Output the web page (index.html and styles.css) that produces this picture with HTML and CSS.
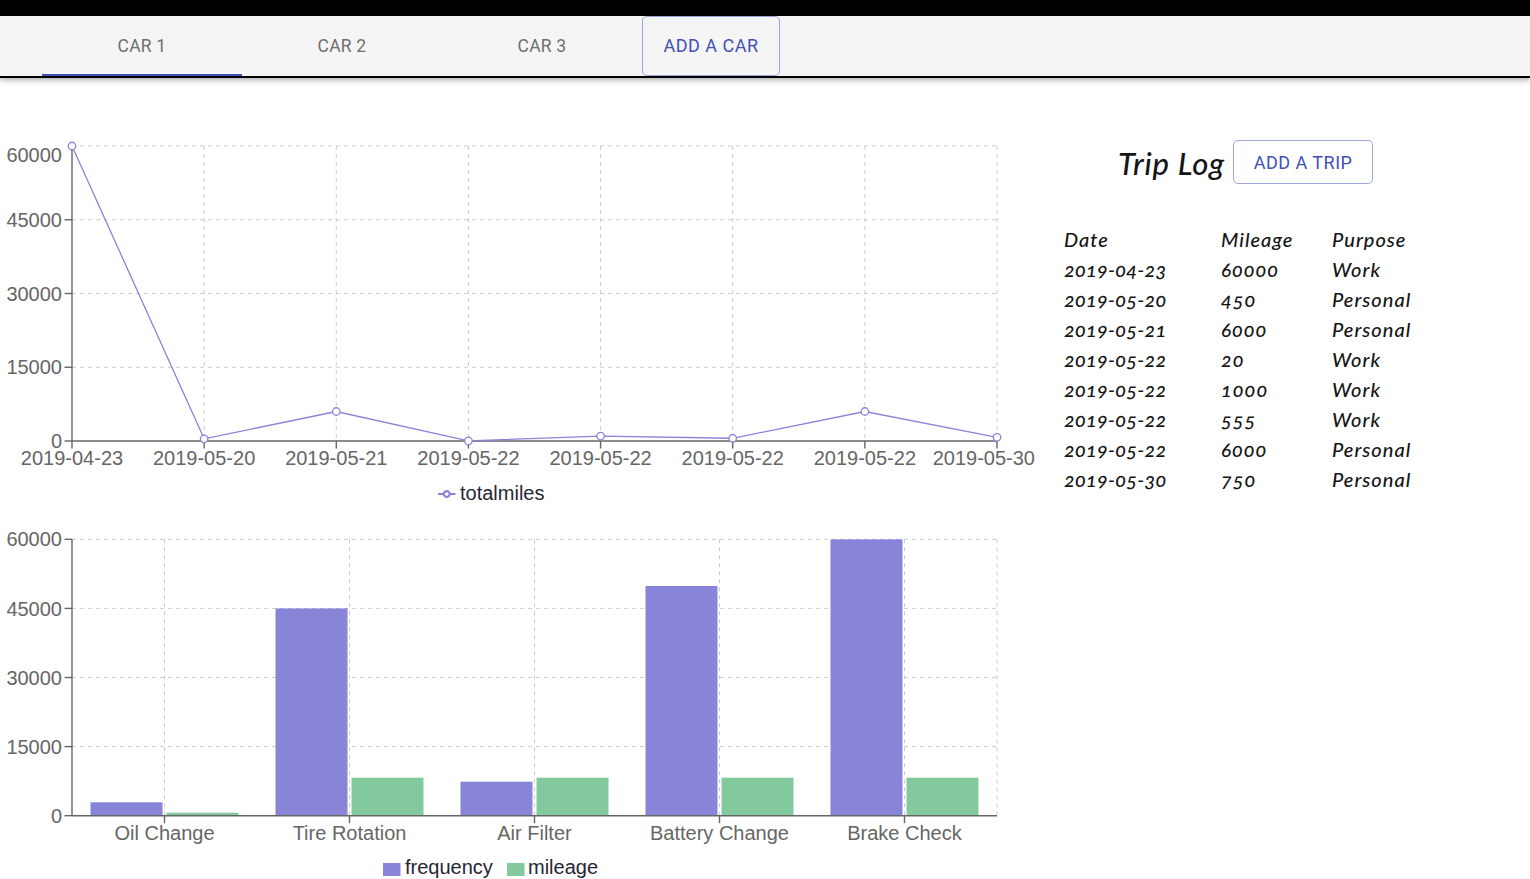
FILE: index.html
```html
<!DOCTYPE html>
<html lang="en">
<head>
<meta charset="utf-8">
<title>Car Log</title>
<link rel="stylesheet" href="styles.css">
</head>
<body>
<div class="topbar"></div>
<header class="appbar">
  <nav class="tabs">
    <div class="tab active">CAR 1</div>
    <div class="tab">CAR 2</div>
    <div class="tab">CAR 3</div>
    <button class="btn-outline btn-tab">ADD A CAR</button>
  </nav>
</header>
<main class="content">
  <section class="charts">
    <svg class="chart" width="1040" height="437" viewBox="0 78 1040 437">
      <g class="grid">
        <line x1="72" y1="146" x2="997" y2="146"/>
        <line x1="72" y1="219.75" x2="997" y2="219.75"/>
        <line x1="72" y1="293.5" x2="997" y2="293.5"/>
        <line x1="72" y1="367.25" x2="997" y2="367.25"/>
        <line x1="204.14" y1="146" x2="204.14" y2="441"/>
        <line x1="336.29" y1="146" x2="336.29" y2="441"/>
        <line x1="468.43" y1="146" x2="468.43" y2="441"/>
        <line x1="600.57" y1="146" x2="600.57" y2="441"/>
        <line x1="732.71" y1="146" x2="732.71" y2="441"/>
        <line x1="864.86" y1="146" x2="864.86" y2="441"/>
        <line x1="997" y1="146" x2="997" y2="441"/>
      </g>
      <g class="axis">
        <line x1="72" y1="146" x2="72" y2="441"/>
        <line x1="72" y1="441" x2="997" y2="441"/>
        <line x1="64.5" y1="219.75" x2="72" y2="219.75"/>
        <line x1="64.5" y1="293.5" x2="72" y2="293.5"/>
        <line x1="64.5" y1="367.25" x2="72" y2="367.25"/>
        <line x1="64.5" y1="441" x2="72" y2="441"/>
        <line x1="72" y1="441" x2="72" y2="448.5"/>
        <line x1="204.14" y1="441" x2="204.14" y2="448.5"/>
        <line x1="336.29" y1="441" x2="336.29" y2="448.5"/>
        <line x1="468.43" y1="441" x2="468.43" y2="448.5"/>
        <line x1="600.57" y1="441" x2="600.57" y2="448.5"/>
        <line x1="732.71" y1="441" x2="732.71" y2="448.5"/>
        <line x1="864.86" y1="441" x2="864.86" y2="448.5"/>
        <line x1="997" y1="441" x2="997" y2="448.5"/>
      </g>
      <g class="tick-y">
        <text x="62" y="162">60000</text>
        <text x="62" y="226.85">45000</text>
        <text x="62" y="300.6">30000</text>
        <text x="62" y="374.35">15000</text>
        <text x="62" y="448.1">0</text>
      </g>
      <g class="tick-x">
        <text x="72" y="465">2019-04-23</text>
        <text x="204.14" y="465">2019-05-20</text>
        <text x="336.29" y="465">2019-05-21</text>
        <text x="468.43" y="465">2019-05-22</text>
        <text x="600.57" y="465">2019-05-22</text>
        <text x="732.71" y="465">2019-05-22</text>
        <text x="864.86" y="465">2019-05-22</text>
        <text x="1035" y="465" class="end">2019-05-30</text>
      </g>
      <polyline class="series-line" points="72,146 204.14,438.79 336.29,411.5 468.43,440.9 600.57,436.08 732.71,438.27 864.86,411.5 997,437.31"/>
      <g class="dots">
        <circle cx="72" cy="146" r="3.75"/>
        <circle cx="204.14" cy="438.79" r="3.75"/>
        <circle cx="336.29" cy="411.5" r="3.75"/>
        <circle cx="468.43" cy="440.9" r="3.75"/>
        <circle cx="600.57" cy="436.08" r="3.75"/>
        <circle cx="732.71" cy="438.27" r="3.75"/>
        <circle cx="864.86" cy="411.5" r="3.75"/>
        <circle cx="997" cy="437.31" r="3.75"/>
      </g>
      <g class="legend">
        <g transform="translate(438 485.25) scale(0.547)">
          <path class="legend-line" d="M0,16h10.67A5.33,5.33,0,1,1,21.33,16H32M21.33,16A5.33,5.33,0,1,1,10.67,16"/>
        </g>
        <text x="460" y="500">totalmiles</text>
      </g>
    </svg>

    <svg class="chart" width="1040" height="364" viewBox="0 515 1040 364">
      <g class="grid">
        <line x1="72" y1="539.3" x2="997" y2="539.3"/>
        <line x1="72" y1="608.4" x2="997" y2="608.4"/>
        <line x1="72" y1="677.5" x2="997" y2="677.5"/>
        <line x1="72" y1="746.6" x2="997" y2="746.6"/>
        <line x1="164.5" y1="539.3" x2="164.5" y2="815.7"/>
        <line x1="349.5" y1="539.3" x2="349.5" y2="815.7"/>
        <line x1="534.5" y1="539.3" x2="534.5" y2="815.7"/>
        <line x1="719.5" y1="539.3" x2="719.5" y2="815.7"/>
        <line x1="904.5" y1="539.3" x2="904.5" y2="815.7"/>
        <line x1="997" y1="539.3" x2="997" y2="815.7"/>
      </g>
      <g class="bars-freq">
        <rect x="90.5" y="802.3" width="72" height="13.4"/>
        <rect x="275.5" y="608.4" width="72" height="207.3"/>
        <rect x="460.5" y="781.7" width="72" height="34"/>
        <rect x="645.5" y="586" width="72" height="229.7"/>
        <rect x="830.5" y="539.3" width="72" height="276.4"/>
      </g>
      <g class="bars-mileage">
        <rect x="166.5" y="812.7" width="72" height="3"/>
        <rect x="351.5" y="777.7" width="72" height="38"/>
        <rect x="536.5" y="777.7" width="72" height="38"/>
        <rect x="721.5" y="777.7" width="72" height="38"/>
        <rect x="906.5" y="777.7" width="72" height="38"/>
      </g>
      <g class="axis">
        <line x1="72" y1="539.3" x2="72" y2="815.7"/>
        <line x1="72" y1="815.7" x2="997" y2="815.7"/>
        <line x1="64.5" y1="539.3" x2="72" y2="539.3"/>
        <line x1="64.5" y1="608.4" x2="72" y2="608.4"/>
        <line x1="64.5" y1="677.5" x2="72" y2="677.5"/>
        <line x1="64.5" y1="746.6" x2="72" y2="746.6"/>
        <line x1="64.5" y1="815.7" x2="72" y2="815.7"/>
        <line x1="164.5" y1="815.7" x2="164.5" y2="823.2"/>
        <line x1="349.5" y1="815.7" x2="349.5" y2="823.2"/>
        <line x1="534.5" y1="815.7" x2="534.5" y2="823.2"/>
        <line x1="719.5" y1="815.7" x2="719.5" y2="823.2"/>
        <line x1="904.5" y1="815.7" x2="904.5" y2="823.2"/>
      </g>
      <g class="tick-y">
        <text x="62" y="546.4">60000</text>
        <text x="62" y="615.5">45000</text>
        <text x="62" y="684.6">30000</text>
        <text x="62" y="753.7">15000</text>
        <text x="62" y="822.8">0</text>
      </g>
      <g class="tick-x">
        <text x="164.5" y="840">Oil Change</text>
        <text x="349.5" y="840">Tire Rotation</text>
        <text x="534.5" y="840">Air Filter</text>
        <text x="719.5" y="840">Battery Change</text>
        <text x="904.5" y="840">Brake Check</text>
      </g>
      <g class="legend">
        <rect class="sw-freq" x="383" y="863" width="17.5" height="13"/>
        <text x="405" y="873.5">frequency</text>
        <rect class="sw-mileage" x="507" y="863" width="17.5" height="13"/>
        <text x="528" y="873.5">mileage</text>
      </g>
    </svg>
  </section>

  <aside class="triplog">
    <div class="triplog-head">
      <h2 class="triplog-title">Trip Log</h2>
      <button class="btn-outline btn-trip">ADD A TRIP</button>
    </div>
    <table class="trips">
      <thead>
        <tr><th class="col-date">Date</th><th class="col-miles">Mileage</th><th>Purpose</th></tr>
      </thead>
      <tbody>
        <tr><td>2019-04-23</td><td>60000</td><td>Work</td></tr>
        <tr><td>2019-05-20</td><td>450</td><td>Personal</td></tr>
        <tr><td>2019-05-21</td><td>6000</td><td>Personal</td></tr>
        <tr><td>2019-05-22</td><td>20</td><td>Work</td></tr>
        <tr><td>2019-05-22</td><td>1000</td><td>Work</td></tr>
        <tr><td>2019-05-22</td><td>555</td><td>Work</td></tr>
        <tr><td>2019-05-22</td><td>6000</td><td>Personal</td></tr>
        <tr><td>2019-05-30</td><td>750</td><td>Personal</td></tr>
      </tbody>
    </table>
  </aside>
</main>
</body>
</html>
```

FILE: styles.css
```css
html, body {
  margin: 0;
  padding: 0;
  background: #fff;
  overflow: hidden;
}

body {
  font-family: Roboto, "Liberation Sans", Arial, sans-serif;
  color: rgba(0, 0, 0, 0.87);
}

.topbar {
  height: 16px;
  background: #000;
}

.appbar {
  height: 60px;
  background: #f5f5f5;
  border-bottom: 2px solid #000;
  box-shadow: 0 3px 6px rgba(0, 0, 0, 0.22), 0 1px 3px rgba(0, 0, 0, 0.12);
  position: relative;
  z-index: 1;
}

.tabs {
  display: flex;
  height: 100%;
  padding-left: 42px;
}

.tab {
  width: 200px;
  height: 100%;
  display: flex;
  align-items: center;
  justify-content: center;
  font-size: 17.5px;
  font-weight: 400;
  letter-spacing: 0.2px;
  color: #707070;
  box-sizing: border-box;
  position: relative;
}

.tab.active::after {
  content: "";
  position: absolute;
  left: 0;
  right: 0;
  bottom: 0;
  height: 2px;
  background: #3f51b5;
}

.btn-outline {
  font-family: Roboto, "Liberation Sans", Arial, sans-serif;
  font-size: 18px;
  font-weight: 400;
  letter-spacing: 0.5px;
  color: #3f51b5;
  background: transparent;
  border: 1px solid rgba(63, 81, 181, 0.5);
  border-radius: 5px;
  padding: 0;
  cursor: pointer;
  box-sizing: border-box;
}

.btn-tab {
  height: 60px;
  width: 138px;
  padding-bottom: 1px;
}

.btn-trip {
  height: 44px;
  width: 140px;
}

.content {
  display: grid;
  grid-template-columns: 1040px 1fr;
}

.charts {
  display: flex;
  flex-direction: column;
}

.chart {
  display: block;
  font-family: "Liberation Sans", Arial, sans-serif;
  font-size: 20px;
}

.grid line {
  stroke: #ccc;
  stroke-width: 1;
  stroke-dasharray: 4 4;
}

.axis line {
  stroke: #666;
  stroke-width: 1.4;
}

.tick-y text {
  fill: #666;
  text-anchor: end;
}

.tick-x text {
  fill: #666;
  text-anchor: middle;
}

.tick-x text.end {
  text-anchor: end;
}

.series-line {
  fill: none;
  stroke: #8884d8;
  stroke-width: 1.3;
}

.dots circle {
  fill: #fff;
  stroke: #8884d8;
  stroke-width: 1.3;
}

.legend text {
  fill: #262633;
}

.legend-line {
  fill: none;
  stroke: #8884d8;
  stroke-width: 4;
}

.bars-freq rect,
.sw-freq {
  fill: #8884d8;
}

.bars-mileage rect,
.sw-mileage {
  fill: #82ca9d;
}

.triplog {
  padding: 62px 0 0 24px;
  font-family: Lato, "Open Sans", sans-serif;
  font-style: italic;
  font-variant-numeric: oldstyle-nums;
  color: #151515;
}

.triplog-head {
  display: flex;
  align-items: center;
  gap: 8px;
  padding-left: 54px;
  height: 44px;
}

.triplog-title {
  margin: 0;
  font-size: 31px;
  font-weight: 500;
  letter-spacing: 0.8px;
  line-height: 1;
  padding-top: 2px;
}

.trips {
  margin-top: 40px;
  border-collapse: collapse;
  font-size: 20px;
  line-height: 30px;
  letter-spacing: 1px;
}

.trips th,
.trips td {
  padding: 0;
  text-align: left;
  font-weight: 500;
  white-space: nowrap;
}

.trips td:first-child {
  letter-spacing: 0.2px;
}

.col-date {
  width: 157px;
}

.col-miles {
  width: 111px;
}
```
